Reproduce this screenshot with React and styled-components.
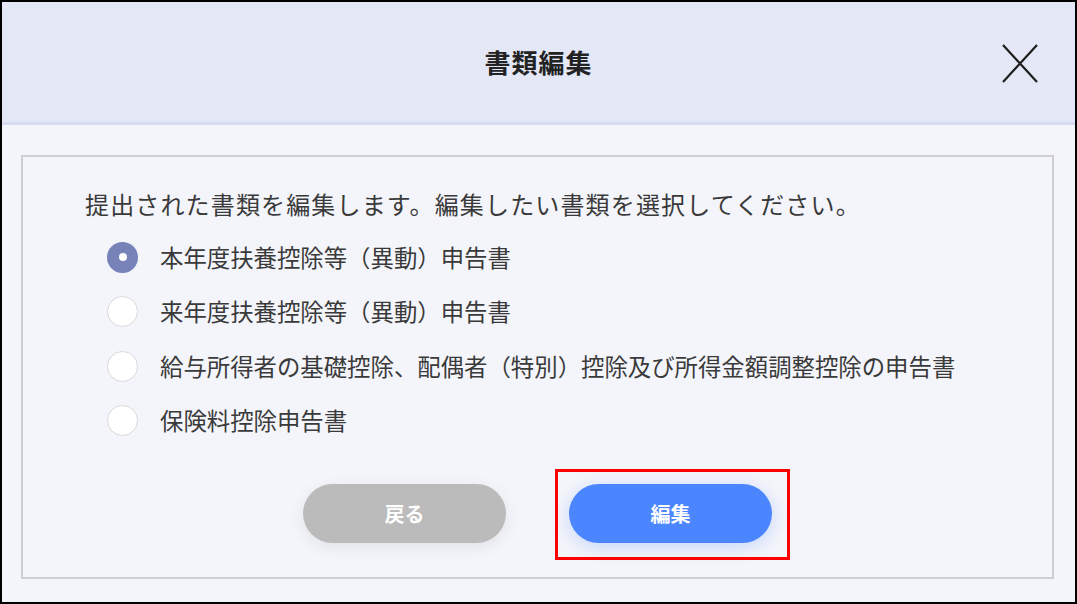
import React, { useState } from 'react';
import styled, { createGlobalStyle } from 'styled-components';

const GlobalStyle = createGlobalStyle`
  html, body {
    margin: 0;
    padding: 0;
    background: #f4f5fa;
  }
  * {
    box-sizing: border-box;
  }
`;

const Frame = styled.div`
  width: 1077px;
  height: 604px;
  border: 2px solid #000;
  background: #f4f5fa;
  display: flex;
  flex-direction: column;
  font-family: "Noto Sans CJK JP", "Noto Sans", sans-serif;
  color: #333;
`;

const Header = styled.header`
  position: relative;
  height: 123px;
  flex-shrink: 0;
  background: #e4e7f6;
  border-bottom: 3px solid #d7dbf1;
  display: flex;
  align-items: center;
  justify-content: center;
`;

const Title = styled.h1`
  margin: 0;
  font-size: 26px;
  font-weight: 700;
  color: #222;
  letter-spacing: 1px;
  padding-bottom: 2px;
`;

const CloseButton = styled.button`
  position: absolute;
  right: 36px;
  top: 41px;
  width: 38px;
  height: 41px;
  padding: 0;
  border: none;
  background: transparent;
  cursor: pointer;
  display: flex;
  align-items: center;
  justify-content: center;
`;

const Body = styled.div`
  flex: 1;
  padding: 30px 21px 23px 19px;
  display: flex;
`;

const Box = styled.section`
  flex: 1;
  border: 2px solid #cfcfd2;
  padding: 29px 0 0 62px;
  display: flex;
  flex-direction: column;
`;

const Intro = styled.p`
  margin: 0;
  font-size: 24px;
  line-height: 36px;
  color: #3a3a3a;
  letter-spacing: 1.15px;
`;

const OptionList = styled.div`
  margin-top: 8px;
  display: flex;
  flex-direction: column;
`;

const Option = styled.label`
  height: 54.5px;
  display: flex;
  align-items: center;
  padding-left: 22px;
  gap: 22px;
  cursor: pointer;
`;

const Radio = styled.span`
  width: 31px;
  height: 31px;
  border-radius: 50%;
  flex-shrink: 0;
  display: flex;
  align-items: center;
  justify-content: center;
  background: ${(props) => (props.checked ? '#7682b8' : '#fff')};
  border: ${(props) => (props.checked ? 'none' : '1.5px solid #d9d9dc')};
  &::after {
    content: '';
    width: 8px;
    height: 8px;
    border-radius: 50%;
    background: #fff;
    display: ${(props) => (props.checked ? 'block' : 'none')};
  }
`;

const OptionText = styled.span`
  font-size: 23.4px;
  color: #3a3a3a;
  line-height: 1;
`;

const Actions = styled.div`
  margin-top: 36px;
  margin-left: -62px;
  display: flex;
  justify-content: center;
  gap: 63px;
`;

const Button = styled.button`
  position: relative;
  width: 203px;
  height: 59px;
  border: none;
  border-radius: 30px;
  font-family: "Noto Sans CJK JP", sans-serif;
  font-size: 20px;
  font-weight: 700;
  color: #fff;
  cursor: pointer;
  background: ${(props) => (props.primary ? '#4c86fe' : '#bbbbbb')};
  box-shadow: ${(props) =>
    props.primary
      ? '0 4px 18px rgba(76, 134, 254, 0.28)'
      : '0 4px 16px rgba(0, 0, 0, 0.08)'};
`;

const Highlight = styled.span`
  position: absolute;
  left: -14px;
  right: -18px;
  top: -15px;
  bottom: -17px;
  border: 3px solid #ff0000;
  pointer-events: none;
`;

const options = [
  '本年度扶養控除等（異動）申告書',
  '来年度扶養控除等（異動）申告書',
  '給与所得者の基礎控除、配偶者（特別）控除及び所得金額調整控除の申告書',
  '保険料控除申告書',
];

export default function App() {
  const [selected, setSelected] = useState(0);

  return (
    <>
      <GlobalStyle />
      <Frame>
        <Header>
          <Title>書類編集</Title>
          <CloseButton aria-label="閉じる">
            <svg width="36" height="39" viewBox="0 0 36 39">
              <path d="M1 1 L35 38 M35 1 L1 38" stroke="#1e1e1e" strokeWidth="2.2" fill="none" />
            </svg>
          </CloseButton>
        </Header>
        <Body>
          <Box>
            <Intro>提出された書類を編集します。編集したい書類を選択してください。</Intro>
            <OptionList>
              {options.map((label, i) => (
                <Option key={label} onClick={() => setSelected(i)}>
                  <Radio checked={selected === i} />
                  <OptionText>{label}</OptionText>
                </Option>
              ))}
            </OptionList>
            <Actions>
              <Button>戻る</Button>
              <Button primary>
                編集
                <Highlight />
              </Button>
            </Actions>
          </Box>
        </Body>
      </Frame>
    </>
  );
}
